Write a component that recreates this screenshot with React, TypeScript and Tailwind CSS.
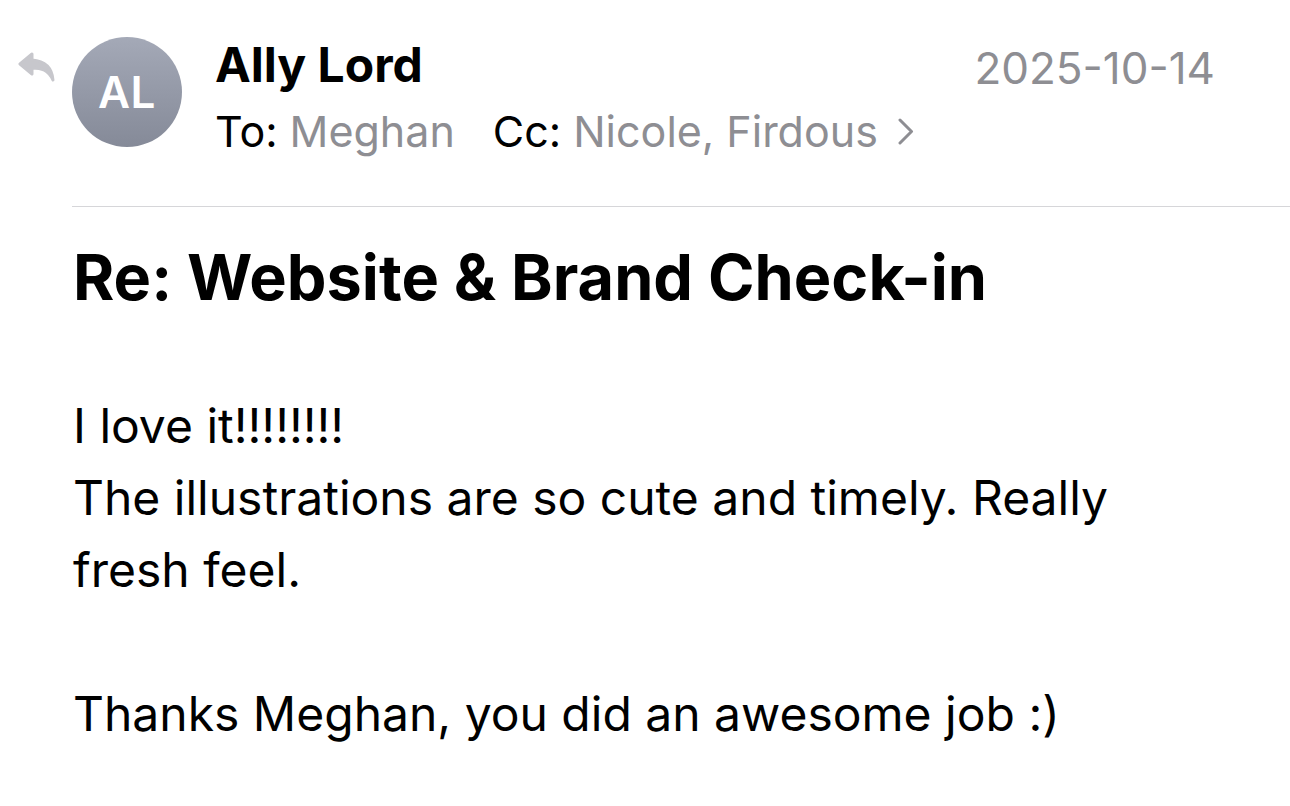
import React from "react";

export default function App() {
  const font = { fontFamily: "Inter, 'Noto Sans', sans-serif" };
  return (
    <div className="w-[1290px] h-[806px] bg-white overflow-hidden text-black" style={font}>
      <div className="flex items-start pt-[37px]">
        <div className="w-[72px] pt-[15px] pl-[18px] shrink-0">
          <svg width="38" height="30" viewBox="0 0 38 30">
            <path d="M14 2 L2 12 L14 22 L14 16 C24 16 30 18 35 28 C34 16 27 9 14 8 Z" fill="#c7c7cc" stroke="#c7c7cc" strokeWidth="3" strokeLinejoin="round" />
          </svg>
        </div>
        <div className="w-[110px] h-[110px] rounded-full bg-gradient-to-b from-[#a4a9b7] to-[#858a98] flex items-center justify-center shrink-0">
          <span className="text-white text-[44px] font-semibold tracking-[0.5px]">AL</span>
        </div>
        <div className="flex-1 pl-[33px] pr-[75px]">
          <div className="flex justify-between items-start">
            <div className="text-[48px] font-bold leading-[60px] mt-[-2px]">Ally Lord</div>
            <div className="text-[44px] leading-[60px] text-[#8e8e93] mt-[1px]">2025-10-14</div>
          </div>
          <div className="flex items-center text-[43px] leading-[52px] mt-[7px]">
            <span>To:</span>
            <span className="text-[#8e8e93] ml-[12px]">Meghan</span>
            <span className="ml-[38px]">Cc:</span>
            <span className="text-[#8e8e93] ml-[12px]">Nicole, Firdous</span>
            <svg className="ml-[20px]" width="16" height="27" viewBox="0 0 16 27">
              <path d="M2 2 L13.5 13.5 L2 25" fill="none" stroke="#8e8e93" strokeWidth="3" strokeLinecap="round" strokeLinejoin="round" />
            </svg>
          </div>
        </div>
      </div>
      <div className="ml-[72px] mt-[49px] h-[1px] bg-[#d6d6d9]" />
      <div className="pl-[73px] pt-[34px]">
        <h1 className="text-[63px] font-bold leading-[72px]">Re: Website &amp; Brand Check-in</h1>
        <div className="mt-[77px] text-[48px] leading-[72px]">
          <div>I love it!!!!!!!!</div>
          <div className="w-[1100px]">The illustrations are so cute and timely. Really fresh feel.</div>
          <div className="h-[72px]" />
          <div>Thanks Meghan, you did an awesome job :)</div>
        </div>
      </div>
    </div>
  );
}
